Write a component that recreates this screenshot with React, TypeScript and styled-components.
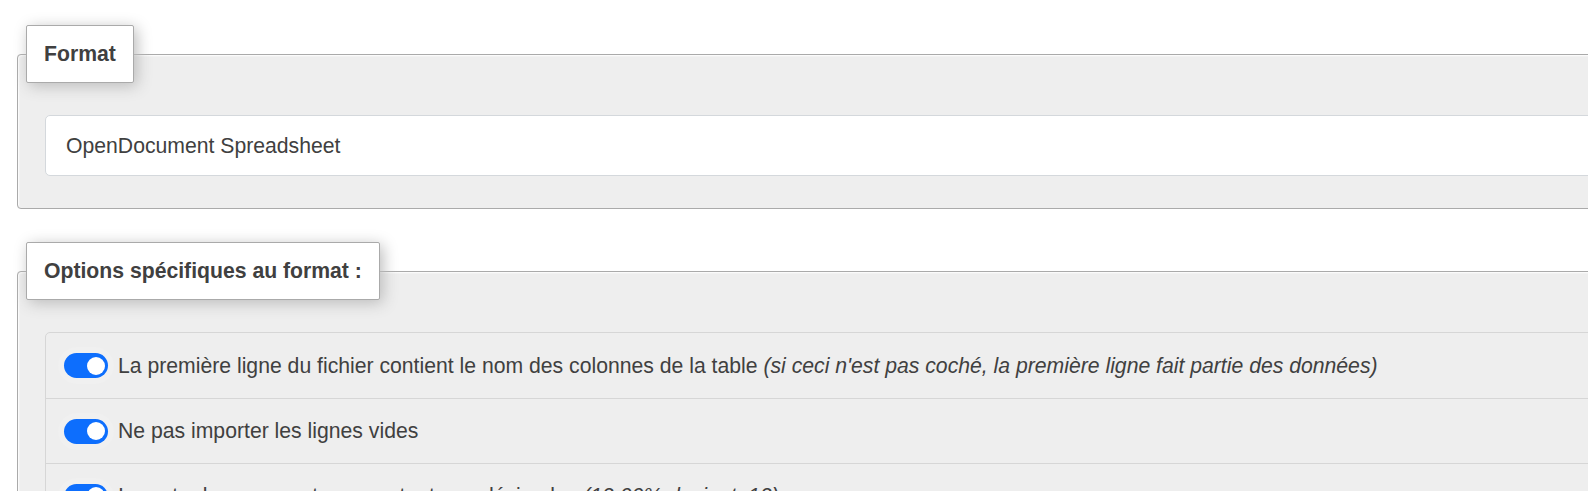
import React from 'react';
import styled, { createGlobalStyle } from 'styled-components';

const Global = createGlobalStyle`
  html, body { margin: 0; padding: 0; overflow: hidden; background: #fff; }
  body {
    font-family: "Liberation Sans", Arial, sans-serif;
    font-size: 21.2px;
    color: #404040;
  }
  * { box-sizing: border-box; }
`;

const Page = styled.div`
  width: 1660px;
  padding: 25px 0 0 17px;
  display: flex;
  flex-direction: column;
  gap: 33px;
`;

const Fieldset = styled.fieldset`
  margin: 0;
  padding: 0 8px;
  min-width: 0;
  border: 1px solid #aaa;
  border-radius: 4px;
  background: #eee;
  box-shadow: 1px 1px 2px #fff inset;
`;

const Legend = styled.legend`
  padding: 16px 17px;
  line-height: 24px;
  font-weight: bold;
  color: #404040;
  background: #fff;
  border: 1px solid #aaa;
  border-radius: 2px;
  box-shadow: 3px 3px 15px #bbb;
`;

const Body = styled.div`
  padding: 32px 0 32px 19px;
`;

const Select = styled.div`
  height: 61px;
  display: flex;
  align-items: center;
  padding-left: 20px;
  background: #fff;
  border: 1px solid #d4d8dc;
  border-radius: 5px;
`;

const OptionList = styled.ul`
  list-style: none;
  margin: 0;
  padding: 0;
  border: 1px solid #d6d6d6;
  border-radius: 5px;
`;

const OptionRow = styled.li`
  height: 65px;
  display: flex;
  align-items: center;
  gap: 10px;
  padding: 0 18px;
  & + & { border-top: 1px solid #d6d6d6; }
`;

const Toggle = styled.span<{ $on: boolean }>`
  position: relative;
  flex: none;
  width: 44px;
  height: 25px;
  border-radius: 13px;
  background: ${p => (p.$on ? '#0d6efd' : '#fff')};
  box-shadow: 0 0 0 6px rgba(255, 255, 255, 0.12);
  &::after {
    content: '';
    position: absolute;
    top: 3.5px;
    ${p => (p.$on ? 'right: 3.5px;' : 'left: 3.5px;')}
    width: 18px;
    height: 18px;
    border-radius: 50%;
    background: #fff;
  }
`;

const Label = styled.span`
  white-space: nowrap;
  line-height: 24px;
`;

const Hint = styled.i`
  font-style: italic;
`;

const options: { text: string; hint?: string }[] = [
  {
    text: 'La première ligne du fichier contient le nom des colonnes de la table',
    hint: "(si ceci n'est pas coché, la première ligne fait partie des données)",
  },
  { text: 'Ne pas importer les lignes vides' },
  { text: 'Importer les pourcentages en tant que décimales', hint: '(12.00% devient .12)' },
];

export default function App() {
  return (
    <>
      <Global />
      <Page>
        <Fieldset>
          <Legend>Format</Legend>
          <Body>
            <Select>OpenDocument Spreadsheet</Select>
          </Body>
        </Fieldset>
        <Fieldset>
          <Legend>Options spécifiques au format :</Legend>
          <Body>
            <OptionList>
              {options.map(o => (
                <OptionRow key={o.text}>
                  <Toggle $on />
                  <Label>
                    {o.text}
                    {o.hint && (
                      <>
                        {' '}
                        <Hint>{o.hint}</Hint>
                      </>
                    )}
                  </Label>
                </OptionRow>
              ))}
            </OptionList>
          </Body>
        </Fieldset>
      </Page>
    </>
  );
}
